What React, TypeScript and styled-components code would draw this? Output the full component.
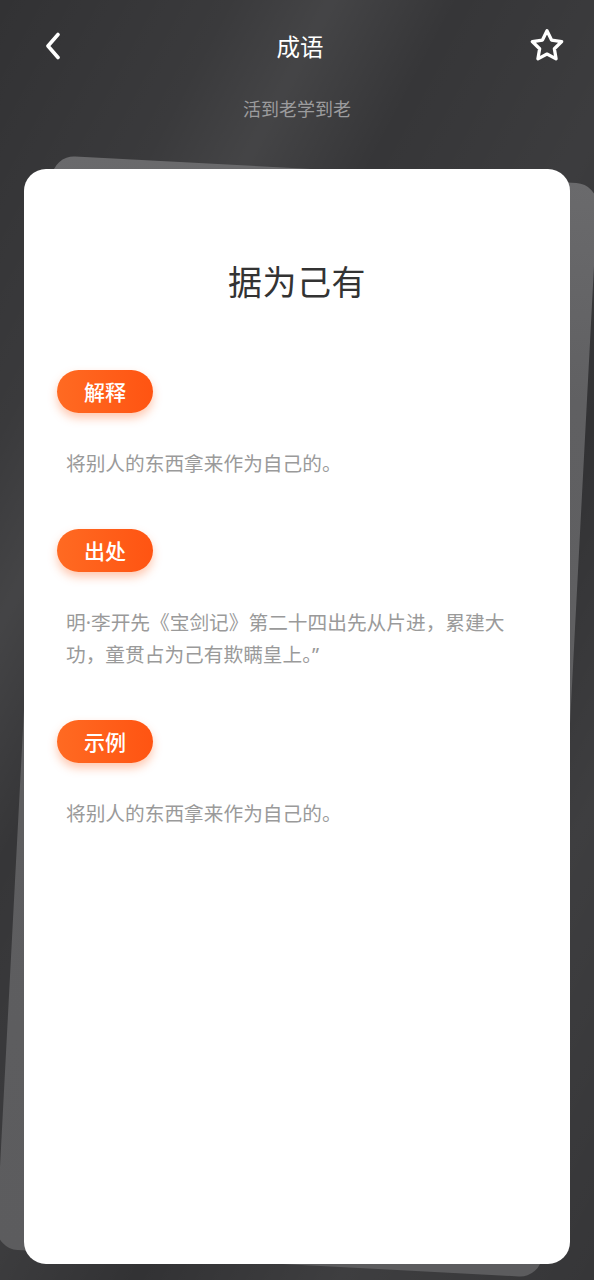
import React from "react";
import styled, { createGlobalStyle } from "styled-components";

const GlobalStyle = createGlobalStyle`
  html, body {
    margin: 0;
    padding: 0;
    background: #333335;
  }
  body {
    font-family: "Noto Sans CJK SC", "Noto Sans", sans-serif;
    -webkit-font-smoothing: antialiased;
  }
  * { box-sizing: border-box; }
`;

const Page = styled.div`
  width: 594px;
  height: 1280px;
  overflow: hidden;
  display: flex;
  flex-direction: column;
  background:
    linear-gradient(118deg,
      rgba(255,255,255,0) 0%,
      rgba(255,255,255,0.04) 18%,
      rgba(255,255,255,0.09) 26%,
      rgba(255,255,255,0.02) 36%,
      rgba(255,255,255,0.05) 52%,
      rgba(255,255,255,0.0) 64%,
      rgba(255,255,255,0.06) 80%,
      rgba(255,255,255,0.02) 100%),
    #323234;
`;

const TopBar = styled.header`
  height: 92px;
  display: grid;
  grid-template-columns: 1fr auto 1fr;
  align-items: center;
  padding: 0 27px 0 33px;
`;

const IconButton = styled.button<{ $align: "start" | "end" }>`
  justify-self: ${(p) => p.$align};
  width: 40px;
  height: 40px;
  padding: 0;
  border: none;
  background: transparent;
  display: flex;
  align-items: center;
  justify-content: center;
  color: #ffffff;
`;

const Title = styled.h1`
  margin: 0;
  font-size: 23.5px;
  font-weight: 400;
  color: #ffffff;
  line-height: 30px;
`;

const Subtitle = styled.p`
  margin: 4px 0 0;
  text-align: center;
  font-size: 18px;
  line-height: 24px;
  color: #9c9c9e;
`;

const CardStack = styled.div`
  position: relative;
  margin: 49px 24px 0;
  height: 1095px;

  &::before {
    content: "";
    position: absolute;
    inset: 0;
    border-radius: 22px;
    background: linear-gradient(180deg, #6a6a6c 0%, #606062 20%, #5c5c5e 100%);
    transform: rotate(3deg);
  }
`;

const Card = styled.article`
  position: relative;
  height: 100%;
  background: #ffffff;
  border-radius: 22px;
  padding: 88px 33px 0;
  display: flex;
  flex-direction: column;
`;

const Word = styled.h2`
  margin: 0 0 65px;
  text-align: center;
  font-size: 34px;
  line-height: 48px;
  font-weight: 400;
  color: #333333;
  letter-spacing: 0.5px;
`;

const Section = styled.section`
  display: flex;
  flex-direction: column;
  align-items: flex-start;
  margin-bottom: 49px;
`;

const Tag = styled.span`
  height: 43px;
  padding: 0 27px;
  border-radius: 22px;
  display: inline-flex;
  align-items: center;
  background: linear-gradient(90deg, #ff6a22 0%, #ff5412 100%);
  box-shadow: 0 5px 10px rgba(255, 98, 30, 0.35);
  color: #ffffff;
  font-size: 21px;
  font-weight: 500;
  line-height: 1;
  margin-bottom: 35px;
`;

const Body = styled.p`
  margin: 0;
  padding: 0 9px;
  max-width: 471px;
  font-family: "Noto Sans", "Noto Sans CJK SC", sans-serif;
  font-size: 19.7px;
  line-height: 32px;
  color: #9a9a9a;
`;

const BackIcon = () => (
  <svg width="16" height="28" viewBox="0 0 16 28" fill="none">
    <path
      d="M13 2.5 L3 14 L13 25.5"
      stroke="currentColor"
      strokeWidth="3.6"
      strokeLinecap="round"
      strokeLinejoin="round"
    />
  </svg>
);

const StarIcon = () => (
  <svg width="38" height="36" viewBox="0 0 24 23" fill="none">
    <path
      d="M12 1.8l2.9 5.9 6.5 0.95-4.7 4.6 1.1 6.45L12 16.65l-5.8 3.05 1.1-6.45-4.7-4.6 6.5-0.95z"
      stroke="currentColor"
      strokeWidth="2.1"
      strokeLinejoin="round"
    />
  </svg>
);

const sections = [
  { tag: "解释", text: "将别人的东西拿来作为自己的。" },
  {
    tag: "出处",
    text: "明·李开先《宝剑记》第二十四出先从片进，累建大功，童贯占为己有欺瞒皇上。”",
  },
  { tag: "示例", text: "将别人的东西拿来作为自己的。" },
];

export default function App() {
  return (
    <>
      <GlobalStyle />
      <Page>
        <TopBar>
          <IconButton $align="start" aria-label="返回">
            <BackIcon />
          </IconButton>
          <Title>成语</Title>
          <IconButton $align="end" aria-label="收藏">
            <StarIcon />
          </IconButton>
        </TopBar>
        <Subtitle>活到老学到老</Subtitle>
        <CardStack>
          <Card>
            <Word>据为己有</Word>
            {sections.map((s) => (
              <Section key={s.tag}>
                <Tag>{s.tag}</Tag>
                <Body>{s.text}</Body>
              </Section>
            ))}
          </Card>
        </CardStack>
      </Page>
    </>
  );
}
